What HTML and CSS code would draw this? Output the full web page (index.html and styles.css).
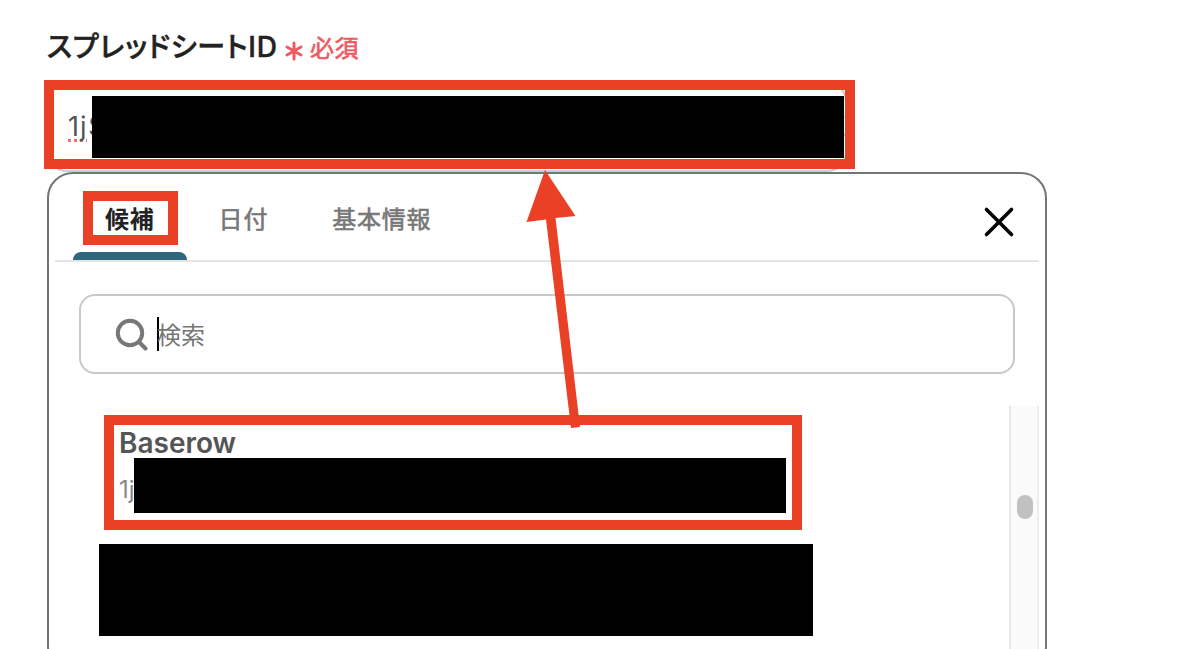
FILE: index.html
```html
<!DOCTYPE html>
<html lang="ja">
<head>
    <meta charset="UTF-8">
    <meta name="viewport" content="width=device-width, initial-scale=1.0">
    <title>スプレッドシートID</title>
    <link rel="stylesheet" href="styles.css">
</head>
<body>
    <div class="page">
        <div class="field-label">
            <div class="label-text">スプレッドシートID</div>
            <svg class="asterisk" width="20" height="20" viewBox="0 0 20 20">
                <path d="M10 2v16M3 6l14 8M17 6L3 14"/>
            </svg>
            <span class="required">必須</span>
        </div>
        <div class="sheet-input">
            <span class="misspelled">1j</span><span class="value-rest">S</span>
            <span class="value-end">E</span>
            <div class="redacted redacted-input"></div>
            <div class="mark mark-input"></div>
        </div>

        <div class="panel">
            <!-- tabs and the close button -->
            <div class="tabs">
                <div class="tab active">候補<div class="mark mark-tab"></div></div>
                <div class="tab">日付</div>
                <div class="tab">基本情報</div>
                <svg class="close" width="32" height="32" viewBox="0 0 32 32">
                    <path d="M3.5 3.5l25 25M28.5 3.5l-25 25"/>
                </svg>
            </div>
            <div class="search">
                <svg class="search-icon" width="34" height="34" viewBox="0 0 34 34">
                    <circle cx="15" cy="15" r="12.2"/>
                    <path d="M24 24l6.5 6.5"/>
                </svg>
                <span class="caret"></span>
                <span class="placeholder">検索</span>
            </div>
            <div class="results">
                <div class="list">
                    <div class="item">
                        <div class="item-name">Baserow</div>
                        <div class="item-id">1j</div>
                        <div class="redacted redacted-id"></div>
                        <div class="mark mark-item"></div>
                    </div>
                    <div class="redacted-row"></div>
                </div>
                <div class="scrollbar"><div class="thumb"></div></div>
            </div>
        </div>

        <!-- arrow from the candidate to the input -->
        <svg class="arrow" width="60" height="262" viewBox="520 168 60 262">
            <path d="M545 170L575.5 216L555.5 218L580 427L571 428L546 219.5L526.5 222Z"/>
        </svg>
    </div>
</body>
</html>
```

FILE: styles.css
```css
* {
    margin: 0;
    padding: 0;
    box-sizing: border-box;
}
body {
    font-family: Inter, "Noto Sans CJK JP", sans-serif;
    background-color: #fff;
    overflow: hidden;
}
.page {
    position: relative;
    height: 649px;
    padding: 28px 0 0 47px;
    overflow: hidden;
}
.field-label {
    display: flex;
    align-items: center;
    height: 40px;
}
.label-text {
    width: 230px;
    margin-bottom: 2px;
    font-size: 28px;
    line-height: 40px;
    font-weight: 500;
    color: #222;
    white-space: nowrap;
    font-feature-settings: "palt";
    letter-spacing: 0.8px;
    -webkit-text-stroke: 0.5px #222;
}
.asterisk {
    margin: 5px 6px 0 7px;
    fill: none;
    stroke: #ec5a62;
    stroke-width: 3;
    stroke-linecap: round;
}
.required {
    margin-top: 2px;
    font-size: 24px;
    line-height: 40px;
    color: #ec5a62;
    letter-spacing: 0.5px;
    -webkit-text-stroke: 0.6px #ec5a62;
}
.sheet-input {
    position: relative;
    display: flex;
    align-items: center;
    width: 800px;
    height: 90px;
    margin-top: 14px;
    padding: 0 0 2px 19px;
    border: 2px solid #c9ced4;
    border-radius: 20px;
    font-size: 27px;
    color: #50555c;
}
.misspelled {
    letter-spacing: 0.9px;
    text-decoration: underline dotted #f0706c 3px;
    text-underline-offset: 3px;
    text-decoration-skip-ink: none;
}
.value-rest {
    margin-left: 1px;
}
.value-end {
    margin: 0 -1px 0 auto;
}
.redacted {
    position: absolute;
    background-color: #000;
}
.redacted-input {
    left: 43px;
    top: 12px;
    width: 752px;
    height: 62px;
}
/* red frames drawn over the form */
.mark {
    position: absolute;
    border: 10px solid #ea4026;
}
.mark-input {
    left: -5px;
    top: -4px;
    width: 811px;
    height: 89px;
}
.panel {
    width: 1000px;
    height: 500px;
    padding: 0 6px;
    background-color: #fff;
    border: 2px solid #757575;
    border-radius: 26px;
}
.tabs {
    display: flex;
    height: 88px;
    padding-left: 18px;
    border-bottom: 2px solid #e4e4e4;
}
.tab {
    position: relative;
    height: 86px;
    padding: 0 32px;
    font-size: 24px;
    line-height: 92px;
    letter-spacing: 0.8px;
    color: #777;
    -webkit-text-stroke: 0.6px #777;
}
.tab.active {
    font-weight: 600;
    color: #222;
    -webkit-text-stroke: 0;
}
.tab.active::after {
    content: "";
    position: absolute;
    left: 0;
    right: 0;
    bottom: 0;
    height: 8px;
    background-color: #2f677f;
    border-radius: 8px 8px 0 0;
}
.mark-tab {
    left: 10px;
    top: 17px;
    width: 95px;
    height: 54px;
}
.close {
    margin: 32px 24px 0 auto;
    fill: none;
    stroke: #000;
    stroke-width: 3.6;
    stroke-linecap: round;
}
.search {
    display: flex;
    align-items: center;
    width: 936px;
    height: 80px;
    margin: 32px 0 0 24px;
    padding-left: 33.5px;
    border: 2px solid #c8c8c8;
    border-radius: 16px;
}
.search-icon {
    margin-top: 1px;
    fill: none;
    stroke: #777;
    stroke-width: 4;
    stroke-linecap: round;
}
.caret {
    width: 2px;
    height: 34px;
    margin-left: 8.5px;
    background-color: #000;
}
.placeholder {
    margin: 0 0 2px -2px;
    font-size: 24px;
    color: #757575;
}
.results {
    display: flex;
    justify-content: space-between;
    height: 260px;
    margin-top: 32px;
}
.list {
    padding: 9px 0 0 44px;
}
.item {
    position: relative;
    width: 714px;
    height: 129px;
    padding: 8px 0 0 20px;
}
.item-name {
    font-size: 28px;
    line-height: 40px;
    font-weight: 600;
    color: #555;
}
.item-id {
    margin-top: 7px;
    font-size: 24px;
    line-height: 40px;
    color: #888;
}
.redacted-id {
    left: 35px;
    top: 43px;
    width: 652px;
    height: 55px;
}
.mark-item {
    left: 5px;
    top: 0;
    width: 698px;
    height: 115px;
}
.redacted-row {
    width: 714px;
    height: 92px;
    background-color: #000;
}
.scrollbar {
    width: 30px;
    padding: 89px 0 0 6px;
    background-color: #fafafa;
    border-left: 2px solid #e8e8e8;
    border-right: 2px solid #ededed;
}
.thumb {
    width: 16px;
    height: 24px;
    background-color: #c1c1c1;
    border-radius: 8px;
}
.arrow {
    position: absolute;
    left: 520px;
    top: 168px;
    fill: #ea4026;
}
```
